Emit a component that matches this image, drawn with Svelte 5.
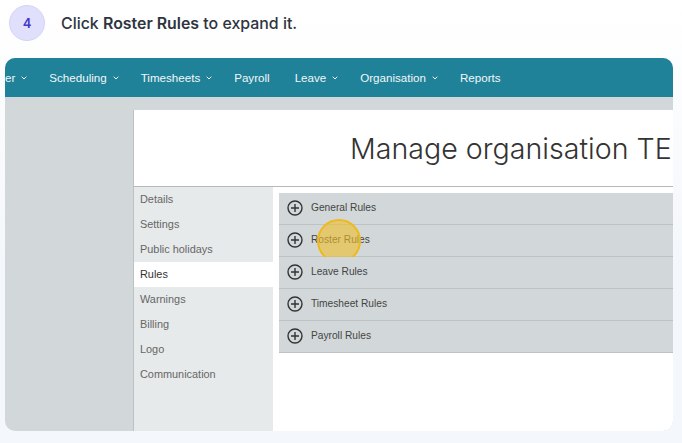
<script>
  const navItems = [
    { label: "er", caret: true },
    { label: "Scheduling", caret: true },
    { label: "Timesheets", caret: true },
    { label: "Payroll" },
    { label: "Leave", caret: true },
    { label: "Organisation", caret: true },
    { label: "Reports" },
  ];
  const sideItems = ["Details", "Settings", "Public holidays", "Rules", "Warnings", "Billing", "Logo", "Communication"];
  const rules = ["General Rules", "Roster Rules", "Leave Rules", "Timesheet Rules", "Payroll Rules"];
</script>

<div class="page">
  <header class="step">
    <span class="badge">4</span>
    <p>Click <strong>Roster Rules</strong> to expand it.</p>
  </header>

  <div class="shot">
    <nav>
      {#each navItems as item}
        <span class="nav-item" class:plain={!item.caret}>
          {item.label}
          {#if item.caret}
            <svg width="6" height="4" viewBox="0 0 6 4"><path d="M.7.7L3 3 5.3.7" fill="none" stroke="currentColor" stroke-width="1" /></svg>
          {/if}
        </span>
      {/each}
    </nav>

    <div class="body">
      <div class="panel">
        <div class="title"><h1>Manage organisation TEST</h1></div>
        <div class="columns">
          <ul class="side">
            {#each sideItems as item}
              <li class:active={item === "Rules"}>{item}</li>
            {/each}
          </ul>
          <div class="rules">
            {#each rules as rule}
              <div class="rule">
                <svg width="16" height="16" viewBox="0 0 16 16">
                  <circle cx="8" cy="8" r="7" fill="none" stroke="#333" stroke-width="1.4" />
                  <path d="M8 4v8M4 8h8" stroke="#333" stroke-width="1.4" />
                </svg>
                <span>{rule}</span>
                {#if rule === "Roster Rules"}<i class="spot"></i>{/if}
              </div>
            {/each}
          </div>
        </div>
      </div>
    </div>
  </div>
</div>

<style>
  :global(body) {
    margin: 0;
    background: #f5f7fb;
  }
  .page {
    width: 682px;
    height: 443px;
    overflow: hidden;
    box-sizing: border-box;
    padding: 5px 9px 12px 5px;
    display: flex;
    flex-direction: column;
    background: linear-gradient(#ffffff, #f4f7fb 60%);
  }
  .step {
    display: flex;
    align-items: center;
    gap: 16px;
    height: 36px;
    margin: 0 0 17px 4px;
    font-family: Inter, "Noto Sans", sans-serif;
  }
  .badge {
    width: 36px;
    height: 36px;
    border-radius: 50%;
    background: #e0e0fc;
    border: 1px solid #d2d4f6;
    box-sizing: border-box;
    display: flex;
    align-items: center;
    justify-content: center;
    color: #4338ca;
    font-size: 13px;
    font-weight: 600;
  }
  .step p {
    margin: 0;
    font-size: 15.9px;
    font-weight: 500;
    color: #2f3440;
  }
  .step strong {
    font-weight: 600;
  }
  .shot {
    flex: 1;
    border-radius: 10px;
    overflow: hidden;
    background: #d2d8d9;
    display: flex;
    flex-direction: column;
    font-family: "Liberation Sans", Arial, sans-serif;
  }
  nav {
    height: 39px;
    flex: none;
    background: #1f8299;
    display: flex;
    align-items: center;
    gap: 22px;
    color: #f2f7f8;
    font-size: 11.6px;
    white-space: nowrap;
  }
  .nav-item {
    display: flex;
    align-items: center;
    gap: 6px;
  }
  .plain {
    padding-right: 3px;
  }
  .body {
    flex: 1;
    min-height: 0;
    padding: 13px 0 0 128px;
    display: flex;
  }
  .panel {
    flex: 1;
    min-width: 0;
    background: #fff;
    border-left: 1px solid #bcc2c3;
    display: flex;
    flex-direction: column;
  }
  .title {
    height: 77px;
    flex: none;
    box-sizing: border-box;
    border-bottom: 1px solid #b5b9ba;
    overflow: hidden;
    padding: 21px 0 0 216px;
  }
  h1 {
    margin: 0;
    font-family: Inter, "Noto Sans", sans-serif;
    font-weight: 300;
    font-size: 28.6px;
    line-height: 36px;
    color: #333;
    white-space: nowrap;
  }
  .columns {
    flex: 1;
    display: flex;
    min-height: 0;
  }
  .side {
    list-style: none;
    margin: 0;
    padding: 0;
    width: 139px;
    flex: none;
    background: #e6eaeb;
  }
  .side li {
    height: 25px;
    line-height: 25px;
    padding-left: 6px;
    font-size: 10.9px;
    color: #666;
  }
  .side li.active {
    background: #fff;
    color: #333;
  }
  .rules {
    flex: 1;
    min-width: 0;
    padding: 6px 0 0 6px;
  }
  .rule {
    position: relative;
    height: 32px;
    box-sizing: border-box;
    background: #d2d8d9;
    border-bottom: 1px solid #bdc2c3;
    display: flex;
    align-items: center;
    gap: 8px;
    padding: 0 0 2px 8px;
    font-size: 10.2px;
    color: #444;
  }
  .spot {
    position: absolute;
    left: 38px;
    top: -6px;
    width: 44px;
    height: 44px;
    box-sizing: border-box;
    border-radius: 50%;
    border: 2px solid #eeb91f;
    background: rgba(240, 190, 40, 0.6);
  }
</style>
